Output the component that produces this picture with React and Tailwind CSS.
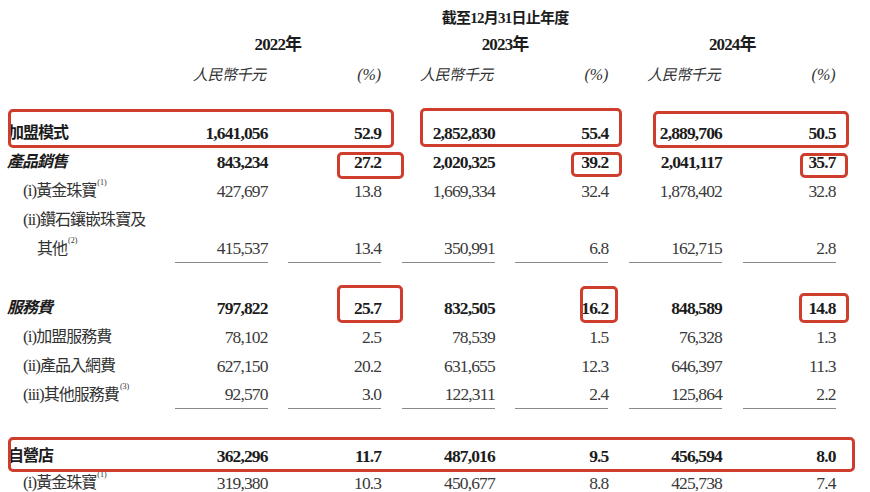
const rows = [
  { label: "加盟模式", kind: "bold", vals: ["1,641,056", "52.9", "2,852,830", "55.4", "2,889,706", "50.5"] },
  { label: "產品銷售", kind: "boldItalic", vals: ["843,234", "27.2", "2,020,325", "39.2", "2,041,117", "35.7"] },
  { label: "黃金珠寶", pre: "(i)", note: "(1)", kind: "sub", vals: ["427,697", "13.8", "1,669,334", "32.4", "1,878,402", "32.8"] },
  { label: "鑽石鑲嵌珠寶及", pre: "(ii)", kind: "sub", vals: ["", "", "", "", "", ""] },
  { label: "其他", note: "(2)", kind: "cont", line: true, vals: ["415,537", "13.4", "350,991", "6.8", "162,715", "2.8"] },
  { gap: "h-[30px]" },
  { label: "服務費", kind: "boldItalic", vals: ["797,822", "25.7", "832,505", "16.2", "848,589", "14.8"] },
  { label: "加盟服務費", pre: "(i)", kind: "sub", vals: ["78,102", "2.5", "78,539", "1.5", "76,328", "1.3"] },
  { label: "產品入網費", pre: "(ii)", kind: "sub", vals: ["627,150", "20.2", "631,655", "12.3", "646,397", "11.3"] },
  { label: "其他服務費", pre: "(iii)", note: "(3)", kind: "sub", line: true, vals: ["92,570", "3.0", "122,311", "2.4", "125,864", "2.2"] },
  { gap: "h-[32px]" },
  { label: "自營店", kind: "bold", vals: ["362,296", "11.7", "487,016", "9.5", "456,594", "8.0"] },
  { label: "黃金珠寶", pre: "(i)", note: "(1)", kind: "sub", h: "h-[24px]", vals: ["319,380", "10.3", "450,677", "8.8", "425,738", "7.4"] },
];

// red highlight frames drawn over the table
const boxes = [
  "left-[8px] top-[109px] w-[386px] h-[39px]",
  "left-[420px] top-[108px] w-[202px] h-[39px]",
  "left-[653px] top-[111px] w-[196px] h-[37px]",
  "left-[337px] top-[152px] w-[67px] h-[27px]",
  "left-[571px] top-[152px] w-[51px] h-[25px]",
  "left-[800px] top-[153px] w-[48px] h-[25px]",
  "left-[337px] top-[285px] w-[66px] h-[38px]",
  "left-[580px] top-[286px] w-[38px] h-[37px]",
  "left-[799px] top-[293px] w-[50px] h-[30px]",
  "left-[8px] top-[437px] w-[847px] h-[35px]",
];

const grid = "grid grid-cols-[154px_repeat(6,93px)] gap-x-[20.6px]";

function Label({ row }) {
  if (row.kind === "bold") {
    return <div className="pl-[8px] font-bold text-[16px] tracking-[-0.06em] text-[#1c1c1c]">{row.label}</div>;
  }
  if (row.kind === "boldItalic") {
    return <div className="pl-[7px] font-bold italic text-[16px] tracking-[-0.06em] text-[#1c1c1c]">{row.label}</div>;
  }
  return (
    <div className={`${row.kind === "cont" ? "pl-[37px]" : "pl-[23px]"} text-[16px] tracking-[-0.06em] text-[#333] whitespace-nowrap`}>
      {row.pre && <span className="text-[17px]">{row.pre}</span>}
      {row.label}
      {row.note && <sup className="text-[8px] tracking-normal align-[7px] ml-[1px]">{row.note}</sup>}
    </div>
  );
}

export default function App() {
  return (
    <div className="w-[870px] h-[492px] overflow-hidden bg-white font-['Liberation_Serif','Noto_Sans_CJK_TC',serif]">
      <div className="relative">
        <div className="h-[6px]" />
        <div className={`${grid} h-[24px] items-center`}>
          <div />
          <div className="col-span-2" />
          <div className="col-span-2 text-center font-bold text-[15px] tracking-[-0.05em] text-[#1c1c1c]">截至12月31日止年度</div>
          <div className="col-span-2" />
        </div>
        <div className={`${grid} h-[30px] items-center`}>
          <div />
          {["2022年", "2023年", "2024年"].map((y) => (
            <div key={y} className="col-span-2 text-center font-bold text-[17px] tracking-[-0.05em] text-[#1c1c1c]">{y}</div>
          ))}
        </div>
        <div className={`${grid} h-[30px] items-center italic text-[#333]`}>
          <div />
          {[0, 1, 2].map((i) => [
            <div key={`a${i}`} className="text-right text-[15px] tracking-[-0.03em] pr-[2px]">人民幣千元</div>,
            <div key={`p${i}`} className="text-right text-[16px]">(%)</div>,
          ])}
        </div>
        <div className="h-[28px]" />
        {rows.map((row, i) =>
          row.gap ? (
            <div key={i} className={row.gap} />
          ) : (
            <div key={i} className={`${grid} ${row.h || "h-[29px]"}`}>
              <div className="flex items-center">
                <Label row={row} />
              </div>
              {row.vals.map((v, j) => (
                <div
                  key={j}
                  className={`flex items-center justify-end text-[17.5px] leading-[22px] tracking-[-0.05em] ${
                    row.kind === "bold" || row.kind === "boldItalic" ? "font-bold text-[#1c1c1c]" : "text-[#3a3a3a]"
                  } ${row.line ? "border-b-[1.5px] border-[#8a8a8a]" : ""}`}
                >
                  {v}
                </div>
              ))}
            </div>
          )
        )}
        {boxes.map((b, i) => (
          <div key={i} className={`absolute ${b} border-[3px] border-[#cf3d2c] rounded-[5px]`} />
        ))}
      </div>
    </div>
  );
}
